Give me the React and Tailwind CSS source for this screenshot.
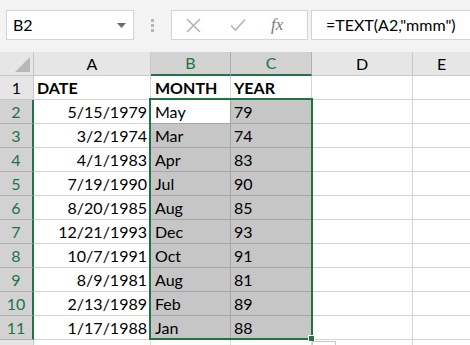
import React from "react";

const rows = [
  ["5/15/1979", "May", "79"],
  ["3/2/1974", "Mar", "74"],
  ["4/1/1983", "Apr", "83"],
  ["7/19/1990", "Jul", "90"],
  ["8/20/1985", "Aug", "85"],
  ["12/21/1993", "Dec", "93"],
  ["10/7/1991", "Oct", "91"],
  ["8/9/1981", "Aug", "81"],
  ["2/13/1989", "Feb", "89"],
  ["1/17/1988", "Jan", "88"],
];

const font = { fontFamily: "Lato, 'Liberation Sans', sans-serif" };

export default function App() {
  return (
    <div className="w-[470px] h-[345px] overflow-hidden bg-white relative text-black" style={font}>
      {/* formula bar */}
      <div className="h-[52px] bg-[#f3f3f3] flex items-start pt-[10px] pl-[6px]">
        <div className="w-[128px] h-[30px] bg-white border border-[#d4d4d4] flex items-center justify-between pl-[6px] pr-[7px]">
          <span className="text-[16px]">B2</span>
          <svg width="9" height="5" viewBox="0 0 9 5"><path d="M0 0 L9 0 L4.5 5 Z" fill="#6b6b6b" /></svg>
        </div>
        <div className="w-[37px] h-[30px] flex flex-col items-center justify-center gap-[2px]">
          <div className="w-[3px] h-[3px] bg-[#b4b4b4]" />
          <div className="w-[3px] h-[3px] bg-[#b4b4b4]" />
          <div className="w-[3px] h-[3px] bg-[#b4b4b4]" />
        </div>
        <div className="w-[137px] h-[30px] bg-white border border-[#d4d4d4] flex items-center">
          <svg className="ml-[14px]" width="15" height="15" viewBox="0 0 15 15"><path d="M1 1 L14 14 M14 1 L1 14" stroke="#b4b4b4" strokeWidth="1.6" /></svg>
          <svg className="ml-[29px]" width="16" height="14" viewBox="0 0 16 14"><path d="M1 7.5 L5.5 12 L15 1.5" stroke="#b4b4b4" strokeWidth="1.6" fill="none" /></svg>
          <span className="ml-[25px] text-[#7a7a7a] italic text-[17px]" style={{ fontFamily: "'Liberation Serif', serif" }}>fx</span>
        </div>
        <div className="ml-[3px] flex-1 h-[30px] bg-white border border-[#d4d4d4] border-r-0 flex items-center pl-[14px]">
          <span className="text-[16px]">=TEXT(A2,"mmm")</span>
        </div>
      </div>

      {/* grid */}
      <div className="grid grid-cols-[34px_117px_80px_81px_101px_1fr] text-[16px]">
        {/* header row */}
        <div className="h-[24px] bg-[#e6e6e6] border-r border-b border-[#c8c8c8] relative overflow-hidden">
          <svg className="absolute right-[3px] bottom-[3px]" width="15" height="15" viewBox="0 0 15 15"><path d="M15 0 L15 15 L0 15 Z" fill="#b8b8b8" /></svg>
        </div>
        <div className="h-[24px] bg-[#e6e6e6] border-r border-b border-[#c8c8c8] flex items-center justify-center">A</div>
        <div className="h-[24px] bg-[#d2d2d2] border-r border-[#b0b0b0] border-b-2 border-b-[#217346] flex items-center justify-center text-[#217346]">B</div>
        <div className="h-[24px] bg-[#d2d2d2] border-r border-[#b0b0b0] border-b-2 border-b-[#217346] flex items-center justify-center text-[#217346]">C</div>
        <div className="h-[24px] bg-[#e6e6e6] border-r border-b border-[#c8c8c8] flex items-center justify-center">D</div>
        <div className="h-[24px] bg-[#e6e6e6] border-b border-[#c8c8c8] flex items-center justify-center">E</div>

        {/* row 1 */}
        <div className="h-[24px] bg-[#e6e6e6] border-r border-b border-[#c8c8c8] flex items-center justify-center">1</div>
        <div className="h-[24px] border-r border-b border-[#d4d4d4] flex items-center pl-[3px] font-bold">DATE</div>
        <div className="h-[24px] border-r border-b border-[#d4d4d4] flex items-center pl-[4px] font-bold">MONTH</div>
        <div className="h-[24px] border-r border-b border-[#d4d4d4] flex items-center pl-[3px] font-bold">YEAR</div>
        <div className="h-[24px] border-r border-b border-[#d4d4d4]" />
        <div className="h-[24px] border-b border-[#d4d4d4]" />

        {rows.map((r, i) => (
          <React.Fragment key={i}>
            <div className="h-[24px] bg-[#d2d2d2] border-r-2 border-r-[#217346] border-b border-b-[#b0b0b0] flex items-center justify-center text-[#217346]">{i + 2}</div>
            <div className="h-[24px] border-r border-b border-[#d4d4d4] flex items-center justify-end pr-[3px]">{r[0]}</div>
            <div className={`h-[24px] border-r border-b border-[#a6a6a6] flex items-center pl-[4px] ${i === 0 ? "bg-white" : "bg-[#c6c6c6]"}`}>{r[1]}</div>
            <div className="h-[24px] border-r border-b border-[#a6a6a6] bg-[#c6c6c6] flex items-center pl-[3px]">{r[2]}</div>
            <div className="h-[24px] border-r border-b border-[#d4d4d4]" />
            <div className="h-[24px] border-b border-[#d4d4d4]" />
          </React.Fragment>
        ))}

        {/* row 12 partial */}
        <div className="h-[24px] bg-[#e6e6e6] border-r border-[#c8c8c8]" />
        <div className="h-[24px] border-r border-[#d4d4d4]" />
        <div className="h-[24px] border-r border-[#d4d4d4]" />
        <div className="h-[24px] border-r border-[#d4d4d4]" />
        <div className="h-[24px] border-r border-[#d4d4d4]" />
        <div className="h-[24px]" />
      </div>

      {/* selection border */}
      <div className="absolute left-[149px] top-[98px] w-[164px] h-[242px] border-2 border-[#217346] pointer-events-none" />
      <div className="absolute left-[308px] top-[335px] w-[7px] h-[7px] bg-[#217346] border border-white" />
      <div className="absolute left-[312px] top-[341px] w-[24px] h-[10px] border border-[#c8c8c8] bg-white" />
    </div>
  );
}
